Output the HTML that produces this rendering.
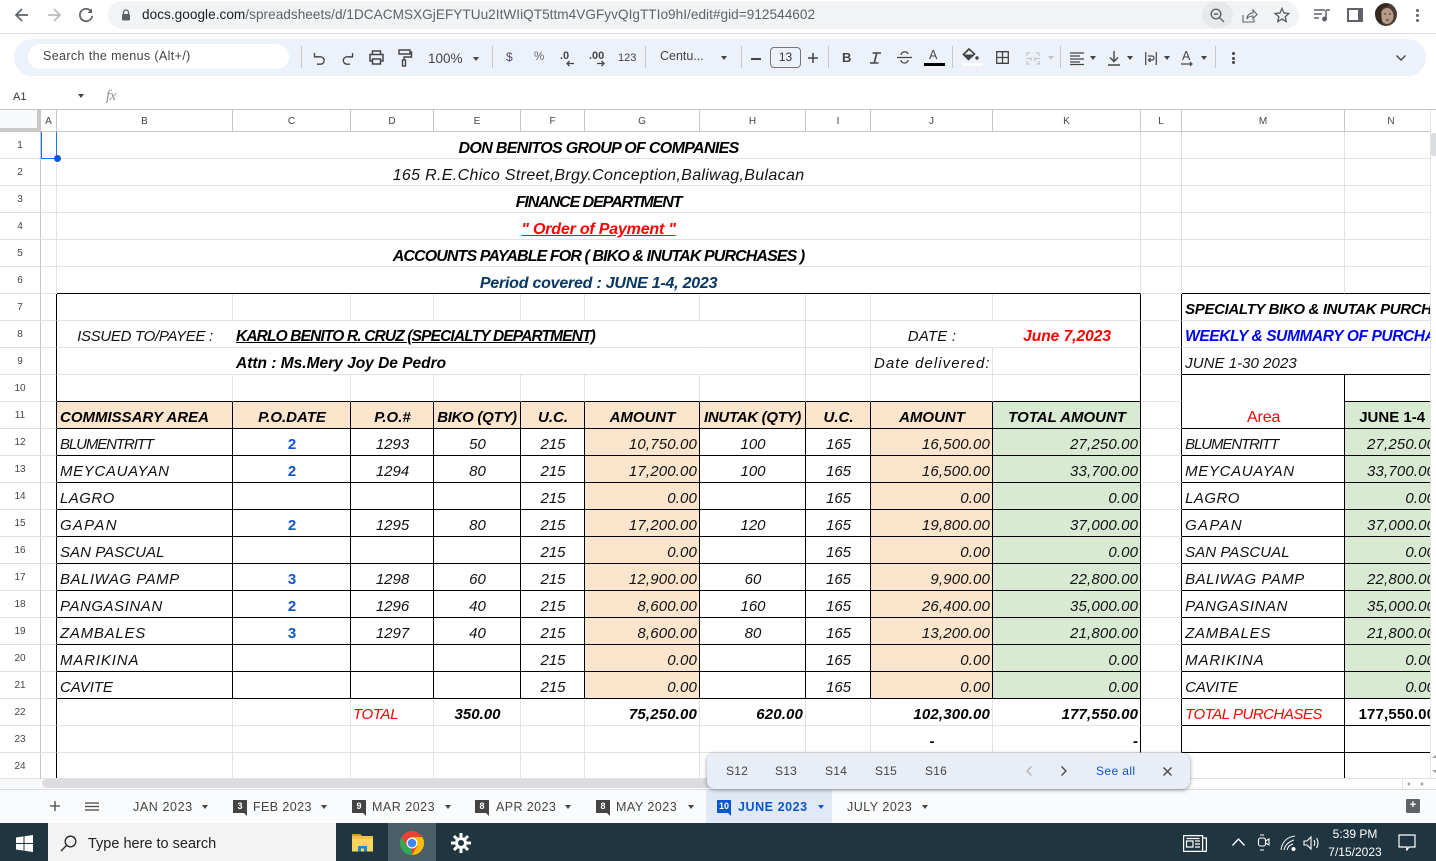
<!DOCTYPE html>
<html><head><meta charset="utf-8"><title>Sheet</title>
<style>
html,body{margin:0;padding:0;background:#fff}
#p{position:relative;width:1436px;height:861px;overflow:hidden;background:#fff;font-family:"Liberation Sans",sans-serif;color:#000}
.a{position:absolute;white-space:nowrap}
svg.a{overflow:visible}
.sep{position:absolute;top:46px;width:1px;height:22px;background:#c7c7c7}
.tb{font-size:13px;color:#444}
table{border-collapse:separate;border-spacing:0;table-layout:fixed}
#g{left:41px;top:132px;width:1397px}
#g td{box-sizing:border-box;height:27px;border-right:1px solid #e2e2e2;border-bottom:1px solid #e2e2e2;padding:0 2px 2px 3px;font-size:15px;font-style:italic;line-height:16px;vertical-align:bottom;white-space:nowrap;color:#111;overflow:visible}
#g td.r{border-right-color:#000}
#g td.b{border-bottom-color:#000}
#g td.n{border-right-color:transparent}
#g td.c{text-align:center}
#g td.e{text-align:right;letter-spacing:.15px}
#g td.t{letter-spacing:.4px}
#g td.h{font-weight:bold;text-align:center;color:#000}
#g td.B{font-weight:bold;color:#000}
#g td.o{background:#fce5cd}
#g td.v{background:#d9ead3}
#g td.d{font-weight:bold;font-style:normal;color:#1155cc;text-align:center}
#g tr.m td{font-size:16px;text-align:center;padding:0 0 1px}
#ch{left:41px;top:110px;width:1397px}
#ch td{box-sizing:border-box;height:22px;border-right:1px solid #c7c7c7;border-bottom:1px solid #c7c7c7;text-align:center;font-size:10px;color:#444;padding:1px 0 0}
#rh{left:0;top:132px;width:41px}
#rh td{box-sizing:border-box;height:27px;border-right:1px solid #c7c7c7;border-bottom:1px solid #e0e0e0;text-align:center;font-size:10px;color:#444;padding:0}
.tab{position:absolute;top:800px;font-size:12.5px;letter-spacing:.4px;color:#444;white-space:nowrap;line-height:15px}
.ar{position:absolute;width:0;height:0;border-left:3.5px solid transparent;border-right:3.5px solid transparent;border-top:4px solid #444}
.bd{position:absolute;top:800px;width:14px;height:13px;background:#444;color:#fff;font-size:9px;font-weight:bold;text-align:center;line-height:13px}
.bd:after{content:"";position:absolute;right:0;top:13px;border-top:3px solid #444;border-left:3px solid transparent}
.bl{background:#0b57d0}
.bl:after{border-top-color:#0b57d0}
.s{position:absolute;top:764px;font-size:12px;letter-spacing:.2px;color:#444;line-height:15px}
</style></head><body><div id="p">

<!-- browser chrome -->
<div class="a" style="left:108px;top:1px;width:1191px;height:28px;border-radius:14px;background:#f1f3f4"></div>
<div class="a" style="left:1202px;top:2px;width:31px;height:26px;border-radius:13px;background:#e6e8ea"></div>
<svg class="a" style="left:14px;top:7px" width="16" height="16" viewBox="0 0 16 16" fill="none" stroke="#5f6368" stroke-width="1.7"><path d="M14 8H2M8 2L2 8l6 6"/></svg>
<svg class="a" style="left:46px;top:7px" width="16" height="16" viewBox="0 0 16 16" fill="none" stroke="#b9bcc0" stroke-width="1.7"><path d="M2 8h12M8 2l6 6-6 6"/></svg>
<svg class="a" style="left:78px;top:7px" width="16" height="16" viewBox="0 0 16 16" fill="none" stroke="#5f6368" stroke-width="1.7"><path d="M13.500 5A6.200 6.200 0 1 0 14.200 9"/><path d="M14 1.500V6H9.500z" fill="#5f6368" stroke="none"/></svg>
<svg class="a" style="left:121px;top:9px" width="10" height="12" viewBox="0 0 10 12"><path d="M2.500 5V3.500a2.500 2.500 0 0 1 5 0V5" fill="none" stroke="#5f6368" stroke-width="1.300"/><rect x="1" y="5" width="8" height="6.500" rx="1" fill="#5f6368"/></svg>
<div class="a" style="left:142px;top:7px;font-size:13.6px;line-height:16px;color:#5f6368;letter-spacing:.035px"><span style="color:#202124">docs.google.com</span>/spreadsheets/d/1DCACMSXGjEFYTUu2ItWIiQT5ttm4VGFyvQIgTTIo9hI/edit#gid=912544602</div>
<svg class="a" style="left:1210px;top:8px" width="15" height="15" viewBox="0 0 15 15" fill="none" stroke="#5f6368" stroke-width="1.400"><circle cx="6" cy="6" r="4.800"/><path d="M9.500 9.500L14 14M3.800 6h4.400"/></svg>
<svg class="a" style="left:1242px;top:8px" width="16" height="15" viewBox="0 0 16 15" fill="none" stroke="#5f6368" stroke-width="1.100"><path d="M1 7v7h11v-3M5 11c0-4 3-6 6-6V2l4 4.500-4 4V8c-3 0-5 1-6 3z"/></svg>
<svg class="a" style="left:1274px;top:7px" width="16" height="16" viewBox="0 0 16 16" fill="none" stroke="#5f6368" stroke-width="1.400"><path d="M8 1.500l2 4.500 4.800.5-3.600 3.200 1 4.800L8 12.100 3.800 14.500l1-4.800L1.200 6.500 6 6z"/></svg>
<svg class="a" style="left:1314px;top:8px" width="16" height="14" viewBox="0 0 16 14" fill="none" stroke="#5f6368" stroke-width="1.500"><path d="M0 2h11M0 6h8M0 10h5M12 2h4M12 2v9"/><circle cx="10.500" cy="11" r="1.700" fill="#5f6368"/></svg>
<div class="a" style="left:1347px;top:8px;width:9px;height:10px;border:2.500px solid #5f6368;border-right-width:5px;border-left-width:2.500px"></div>
<svg class="a" style="left:1375px;top:3px" width="22" height="23" viewBox="0 0 22 23"><ellipse cx="11" cy="11.500" rx="11" ry="11.500" fill="#4b3d35"/><ellipse cx="12" cy="13" rx="6.500" ry="8" fill="#b89a88"/><path d="M0 9C2 2 9-1 15 1c-3 3-6 4-8 4-1 4-1 10 1 17-5-2-8-7-8-13z" fill="#33291f"/><path d="M9 11h2M14 11h2M11 17h3" stroke="#3a2a22" stroke-width="1"/></svg>
<div class="a" style="left:1416px;top:9px;width:3px;height:3px;border-radius:2px;background:#5f6368;box-shadow:0 5px 0 #5f6368,0 10px 0 #5f6368"></div>
<div class="a" style="left:0;top:33px;width:1436px;height:1px;background:#dadce0"></div>

<!-- toolbar -->
<div class="a" style="left:14px;top:39px;width:1412px;height:37px;border-radius:18px;background:#edf2fa"></div>
<div class="a" style="left:28px;top:44px;width:261px;height:25px;border-radius:13px;background:#fff"></div>
<div class="a" style="left:43px;top:48px;font-size:12.5px;line-height:16px;color:#444;letter-spacing:.38px">Search the menus (Alt+/)</div>
<div class="sep" style="left:301px"></div><div class="sep" style="left:492px"></div><div class="sep" style="left:645px"></div><div class="sep" style="left:741px"></div><div class="sep" style="left:828px"></div><div class="sep" style="left:952px"></div><div class="sep" style="left:1060px"></div><div class="sep" style="left:1215px"></div>
<svg class="a" style="left:313px;top:52px" width="13" height="13" viewBox="0 0 13 13" fill="none" stroke="#444" stroke-width="1.300"><path d="M1.500 1v4h4M1.800 4.800H7.500a3.700 3.700 0 0 1 0 7.400H4"/></svg>
<svg class="a" style="left:341px;top:52px" width="13" height="13" viewBox="0 0 13 13" fill="none" stroke="#444" stroke-width="1.300"><path d="M11.500 1v4h-4M11.200 4.800H6a3.700 3.700 0 0 0 0 7.400h3"/></svg>
<svg class="a" style="left:369px;top:50px" width="15" height="15" viewBox="0 0 15 15" fill="none" stroke="#444" stroke-width="1.500"><path d="M3.500 4.500V1h8v3.500M3.500 11H1V4.500h13V11h-2.500M3.500 9h8v5h-8z"/></svg>
<svg class="a" style="left:398px;top:49px" width="14" height="18" viewBox="0 0 14 18" fill="none" stroke="#444" stroke-width="1.400"><path d="M1 1h11v4H1zM12 3h1.500v5H6v3"/><rect x="4.500" y="11" width="3" height="6"/></svg>
<div class="a tb" style="left:428px;top:51px;line-height:16px;font-size:13.500px">100%</div>
<div class="ar" style="left:473px;top:57px"></div>
<div class="a tb" style="left:506px;top:50px;font-size:12px;line-height:15px;color:#5b4a6a">$</div>
<div class="a tb" style="left:534px;top:50px;font-size:11.500px;line-height:15px;color:#666">%</div>
<div class="a" style="left:560px;top:49px;font-size:11px;font-weight:bold;color:#444;line-height:14px">.0</div>
<svg class="a" style="left:566px;top:60px" width="8" height="7" viewBox="0 0 8 7" fill="none" stroke="#444" stroke-width="1.300"><path d="M8 3.500H1M3.500 1L1 3.500 3.500 6"/></svg>
<div class="a" style="left:589px;top:49px;font-size:11px;font-weight:bold;color:#444;line-height:14px">.00</div>
<svg class="a" style="left:597px;top:60px" width="8" height="7" viewBox="0 0 8 7" fill="none" stroke="#444" stroke-width="1.300"><path d="M0 3.500h7M4.500 1L7 3.500 4.500 6"/></svg>
<div class="a tb" style="left:618px;top:51px;font-size:11px;line-height:14px">123</div>
<div class="a tb" style="left:660px;top:49px;font-size:12.500px;line-height:15px">Centu...</div>
<div class="ar" style="left:721px;top:56px"></div>
<div class="a" style="left:751px;top:58px;width:10px;height:1.500px;background:#444"></div>
<div class="a" style="left:770px;top:47px;box-sizing:border-box;width:31px;height:21px;border:1px solid #747775;border-radius:4px;text-align:center;font-size:12px;line-height:19px;color:#333">13</div>
<svg class="a" style="left:808px;top:53px" width="10" height="10" viewBox="0 0 10 10" stroke="#444" stroke-width="1.500"><path d="M0 5h10M5 0v10"/></svg>
<div class="a" style="left:842px;top:50px;font-size:13px;font-weight:bold;line-height:16px;color:#444">B</div>
<svg class="a" style="left:870px;top:52px" width="11" height="12" viewBox="0 0 11 12" fill="none" stroke="#444" stroke-width="1.600"><path d="M2.500 1H11M0 11h8.500M6.800 1L4.200 11"/></svg>
<svg class="a" style="left:897px;top:51px" width="15" height="13" viewBox="0 0 15 13" fill="none" stroke="#444" stroke-width="1.300"><path d="M0 6.500h15M4 4c0-4 7-4 7-1M4 9c0 4 7 4 7 0"/></svg>
<div class="a" style="left:929px;top:48px;font-size:12.500px;line-height:15px;color:#444">A</div>
<div class="a" style="left:924px;top:63px;width:21px;height:3px;background:#000"></div>
<svg class="a" style="left:962px;top:48px" width="17" height="13" viewBox="0 0 17 13"><path d="M7 1L1.500 6.500 6.500 11.500 12.500 6z" fill="none" stroke="#444" stroke-width="1.700"/><path d="M2 6.500h10.500L6.500 11.500z" fill="#444"/><circle cx="15" cy="10" r="1.700" fill="#444"/></svg>
<div class="a" style="left:962px;top:63px;width:21px;height:3px;background:#fff"></div>
<svg class="a" style="left:996px;top:51px" width="13" height="13" viewBox="0 0 13 13" fill="none" stroke="#444" stroke-width="1.300"><path d="M.700.700h11.600v11.600H.700zM6.500 .7v11.600M.7 6.500h11.600"/></svg>
<svg class="a" style="left:1026px;top:52px" width="14" height="13" viewBox="0 0 14 13" fill="none" stroke="#c4c7c9" stroke-width="1.300"><path d="M4 1H1v3M10 1h3v3M4 12H1V9M10 12h3V9M6 5.500L4 7l2 1.500M8 5.500L10 7 8 8.500M0 6.500h4M10 6.500h4"/></svg>
<div class="ar" style="left:1048px;top:56px;border-top-color:#c4c7c9"></div>
<svg class="a" style="left:1070px;top:52px" width="14" height="13" viewBox="0 0 14 13" stroke="#444" stroke-width="1.200"><path d="M0 1h14M0 4h10M0 7h14M0 10h10M0 12.500h14"/></svg>
<div class="ar" style="left:1090px;top:56px"></div>
<svg class="a" style="left:1108px;top:51px" width="12" height="15" viewBox="0 0 12 15" fill="none" stroke="#444" stroke-width="1.400"><path d="M6 0v10M2 6.500L6 10.500 10 6.500M0 14h12"/></svg>
<div class="ar" style="left:1127px;top:56px"></div>
<svg class="a" style="left:1145px;top:52px" width="12" height="13" viewBox="0 0 12 13" fill="none" stroke="#444" stroke-width="1.200"><path d="M.7 0v13M11.300 0v13M3 4h4a2 2 0 0 1 0 4H4M5.500 6L3.500 8l2 2"/></svg>
<div class="ar" style="left:1164px;top:56px"></div>
<div class="a" style="left:1182px;top:49px;font-size:12.500px;line-height:14px;color:#444">A</div>
<svg class="a" style="left:1181px;top:62px" width="13" height="5" viewBox="0 0 13 5" fill="none" stroke="#444" stroke-width="1.200"><path d="M0 2h11M9 0l2 2-2 2"/></svg>
<div class="ar" style="left:1201px;top:56px"></div>
<div class="a" style="left:1232px;top:52px;width:3px;height:3px;border-radius:2px;background:#444;box-shadow:0 5px 0 #444,0 9px 0 #444"></div>
<svg class="a" style="left:1396px;top:55px" width="10" height="6" viewBox="0 0 10 6" fill="none" stroke="#444" stroke-width="1.400"><path d="M.5.500L5 5 9.500.5"/></svg>

<!-- formula bar -->
<div class="a" style="left:13px;top:90px;font-size:11px;line-height:14px;color:#333">A1</div>
<div class="ar" style="left:78px;top:94px"></div>
<div class="a" style="left:106px;top:88px;font-family:'Liberation Serif',serif;font-style:italic;font-size:15px;line-height:16px;color:#909090;letter-spacing:-.5px">fx</div>

<!-- grid -->
<div class="a" style="left:0;top:109px;width:1436px;height:1px;background:#c7c7c7"></div>
<div class="a" style="left:0;top:110px;width:37px;height:18px;background:#f8f9fa"></div>
<div class="a" style="left:37px;top:110px;width:4px;height:22px;background:#c7c7c7"></div>
<div class="a" style="left:0;top:128px;width:37px;height:4px;background:#c7c7c7"></div>
<table class="a" id="ch"><colgroup><col width="16"><col width="176"><col width="118"><col width="83"><col width="87"><col width="64"><col width="115"><col width="106"><col width="65"><col width="122"><col width="148"><col width="41"><col width="163"><col width="93"></colgroup>
<tr><td>A</td><td>B</td><td>C</td><td>D</td><td>E</td><td>F</td><td>G</td><td>H</td><td>I</td><td>J</td><td>K</td><td>L</td><td>M</td><td>N</td></tr></table>
<table class="a" id="rh">
<tr><td>1</td></tr><tr><td>2</td></tr><tr><td>3</td></tr><tr><td>4</td></tr><tr><td>5</td></tr><tr><td>6</td></tr><tr><td>7</td></tr><tr><td>8</td></tr><tr><td>9</td></tr><tr><td>10</td></tr><tr><td>11</td></tr><tr><td>12</td></tr><tr><td>13</td></tr><tr><td>14</td></tr><tr><td>15</td></tr><tr><td>16</td></tr><tr><td>17</td></tr><tr><td>18</td></tr><tr><td>19</td></tr><tr><td>20</td></tr><tr><td>21</td></tr><tr><td>22</td></tr><tr><td>23</td></tr><tr><td>24</td></tr></table>

<div class="a" style="left:0;top:0;width:1430px;height:779px;overflow:hidden;pointer-events:none">
<table class="a" id="g"><colgroup><col width="16"><col width="176"><col width="118"><col width="83"><col width="87"><col width="64"><col width="115"><col width="106"><col width="65"><col width="122"><col width="148"><col width="41"><col width="163"><col width="93"></colgroup>
<tr class="m"><td></td><td colspan="10" style="font-weight:bold;color:#000;letter-spacing:-.67px">DON BENITOS GROUP OF COMPANIES</td><td></td><td></td><td></td></tr>
<tr class="m"><td></td><td colspan="10" style="letter-spacing:.33px">165 R.E.Chico Street,Brgy.Conception,Baliwag,Bulacan</td><td></td><td></td><td></td></tr>
<tr class="m"><td></td><td colspan="10" style="font-weight:bold;color:#000;letter-spacing:-1.08px">FINANCE DEPARTMENT</td><td></td><td></td><td></td></tr>
<tr class="m"><td></td><td colspan="10" style="font-weight:bold;color:#f00;text-decoration:underline;letter-spacing:-.2px">" Order of Payment "</td><td></td><td></td><td></td></tr>
<tr class="m"><td></td><td colspan="10" style="font-weight:bold;color:#000;letter-spacing:-.9px">ACCOUNTS PAYABLE FOR ( BIKO &amp; INUTAK PURCHASES )</td><td></td><td></td><td></td></tr>
<tr class="m"><td></td><td colspan="10" class="b" style="font-weight:bold;color:#073763;letter-spacing:-.23px">Period covered : JUNE 1-4, 2023</td><td></td><td class="b"></td><td class="b"></td></tr>
<tr><td class="r"></td><td></td><td></td><td></td><td></td><td></td><td></td><td></td><td></td><td></td><td class="r"></td><td class="r"></td><td colspan="2" class="B" style="border-right:0;letter-spacing:-.35px">SPECIALTY BIKO &amp; INUTAK PURCHASES</td></tr>
<tr><td class="r"></td><td class="c n" style="letter-spacing:-.3px">ISSUED TO/PAYEE :</td><td colspan="5" class="B n" style="text-decoration:underline;font-size:15.5px;letter-spacing:-.85px">KARLO BENITO R. CRUZ (SPECIALTY DEPARTMENT)</td><td></td><td></td><td class="c n" style="letter-spacing:.2px">DATE :</td><td class="c r" style="color:#f00;font-weight:bold;font-size:15.500px">June 7,2023</td><td class="r"></td><td colspan="2" class="B" style="color:#00f;border-right:0;font-size:15.500px;letter-spacing:-.4px">WEEKLY &amp; SUMMARY OF PURCHASES</td></tr>
<tr><td class="r"></td><td class="n"></td><td colspan="5" class="B n" style="font-size:15.500px">Attn : Ms.Mery Joy De Pedro</td><td></td><td></td><td class="e" style="letter-spacing:1.05px">Date delivered:</td><td class="r"></td><td class="r"></td><td colspan="2" class="b" style="border-right:0;letter-spacing:.05px">JUNE 1-30 2023</td></tr>
<tr><td class="r"></td><td class="b"></td><td class="b"></td><td class="b"></td><td class="b"></td><td class="b"></td><td class="b"></td><td class="b"></td><td class="b"></td><td class="b"></td><td class="b r"></td><td class="r"></td><td rowspan="2" class="r b c" style="font-style:normal;color:#f00;font-size:16px;letter-spacing:-.1px">Area</td><td class="b"></td></tr>
<tr><td class="r"></td><td class="o b r B">COMMISSARY AREA</td><td class="o b r h">P.O.DATE</td><td class="o b r h">P.O.#</td><td class="o b r h" style="padding-left:0;padding-right:0;letter-spacing:-.3px">BIKO (QTY)</td><td class="o b r h">U.C.</td><td class="o b r h">AMOUNT</td><td class="o b r h" style="padding-left:0;padding-right:0;letter-spacing:-.3px">INUTAK (QTY)</td><td class="o b r h">U.C.</td><td class="o b r h">AMOUNT</td><td class="v b r h">TOTAL AMOUNT</td><td class="r"></td><td class="v b h" style="font-style:normal;padding-left:2px;padding-right:0;text-align:center">JUNE 1-4</td></tr>
<tr><td class="r"></td><td class="b r" style="letter-spacing:-1.1px">BLUMENTRITT</td><td class="b r d">2</td><td class="b r c">1293</td><td class="b r c">50</td><td class="b r c">215</td><td class="o b r e">10,750.00</td><td class="b r c">100</td><td class="b r c">165</td><td class="o b r e">16,500.00</td><td class="v b r e">27,250.00</td><td class="r"></td><td class="b r" style="letter-spacing:-1.1px">BLUMENTRITT</td><td class="v b e">27,250.00</td></tr>
<tr><td class="r"></td><td class="b r" style="letter-spacing:.65px">MEYCAUAYAN</td><td class="b r d">2</td><td class="b r c">1294</td><td class="b r c">80</td><td class="b r c">215</td><td class="o b r e">17,200.00</td><td class="b r c">100</td><td class="b r c">165</td><td class="o b r e">16,500.00</td><td class="v b r e">33,700.00</td><td class="r"></td><td class="b r" style="letter-spacing:.65px">MEYCAUAYAN</td><td class="v b e">33,700.00</td></tr>
<tr><td class="r"></td><td class="b r" style="letter-spacing:.45px">LAGRO</td><td class="b r d"></td><td class="b r c"></td><td class="b r c"></td><td class="b r c">215</td><td class="o b r e">0.00</td><td class="b r c"></td><td class="b r c">165</td><td class="o b r e">0.00</td><td class="v b r e">0.00</td><td class="r"></td><td class="b r" style="letter-spacing:.45px">LAGRO</td><td class="v b e">0.00</td></tr>
<tr><td class="r"></td><td class="b r" style="letter-spacing:1.25px">GAPAN</td><td class="b r d">2</td><td class="b r c">1295</td><td class="b r c">80</td><td class="b r c">215</td><td class="o b r e">17,200.00</td><td class="b r c">120</td><td class="b r c">165</td><td class="o b r e">19,800.00</td><td class="v b r e">37,000.00</td><td class="r"></td><td class="b r" style="letter-spacing:1.25px">GAPAN</td><td class="v b e">37,000.00</td></tr>
<tr><td class="r"></td><td class="b r" style="letter-spacing:.05px">SAN PASCUAL</td><td class="b r d"></td><td class="b r c"></td><td class="b r c"></td><td class="b r c">215</td><td class="o b r e">0.00</td><td class="b r c"></td><td class="b r c">165</td><td class="o b r e">0.00</td><td class="v b r e">0.00</td><td class="r"></td><td class="b r" style="letter-spacing:.05px">SAN PASCUAL</td><td class="v b e">0.00</td></tr>
<tr><td class="r"></td><td class="b r" style="letter-spacing:.5px">BALIWAG PAMP</td><td class="b r d">3</td><td class="b r c">1298</td><td class="b r c">60</td><td class="b r c">215</td><td class="o b r e">12,900.00</td><td class="b r c">60</td><td class="b r c">165</td><td class="o b r e">9,900.00</td><td class="v b r e">22,800.00</td><td class="r"></td><td class="b r" style="letter-spacing:.5px">BALIWAG PAMP</td><td class="v b e">22,800.00</td></tr>
<tr><td class="r"></td><td class="b r" style="letter-spacing:.55px">PANGASINAN</td><td class="b r d">2</td><td class="b r c">1296</td><td class="b r c">40</td><td class="b r c">215</td><td class="o b r e">8,600.00</td><td class="b r c">160</td><td class="b r c">165</td><td class="o b r e">26,400.00</td><td class="v b r e">35,000.00</td><td class="r"></td><td class="b r" style="letter-spacing:.55px">PANGASINAN</td><td class="v b e">35,000.00</td></tr>
<tr><td class="r"></td><td class="b r" style="letter-spacing:.75px">ZAMBALES</td><td class="b r d">3</td><td class="b r c">1297</td><td class="b r c">40</td><td class="b r c">215</td><td class="o b r e">8,600.00</td><td class="b r c">80</td><td class="b r c">165</td><td class="o b r e">13,200.00</td><td class="v b r e">21,800.00</td><td class="r"></td><td class="b r" style="letter-spacing:.75px">ZAMBALES</td><td class="v b e">21,800.00</td></tr>
<tr><td class="r"></td><td class="b r" style="letter-spacing:.85px">MARIKINA</td><td class="b r d"></td><td class="b r c"></td><td class="b r c"></td><td class="b r c">215</td><td class="o b r e">0.00</td><td class="b r c"></td><td class="b r c">165</td><td class="o b r e">0.00</td><td class="v b r e">0.00</td><td class="r"></td><td class="b r" style="letter-spacing:.85px">MARIKINA</td><td class="v b e">0.00</td></tr>
<tr><td class="r"></td><td class="b r" style="letter-spacing:-.1px">CAVITE</td><td class="b r d"></td><td class="b r c"></td><td class="b r c"></td><td class="b r c">215</td><td class="o b r e">0.00</td><td class="b r c"></td><td class="b r c">165</td><td class="o b r e">0.00</td><td class="v b r e">0.00</td><td class="r"></td><td class="b r" style="letter-spacing:-.1px">CAVITE</td><td class="v b e">0.00</td></tr>
<tr><td class="r"></td><td></td><td></td><td style="color:#f00;padding-left:2px;letter-spacing:-.35px">TOTAL</td><td class="B c">350.00</td><td></td><td class="B e">75,250.00</td><td class="B e">620.00</td><td></td><td class="B e">102,300.00</td><td class="B e r">177,550.00</td><td class="r"></td><td class="b r" style="color:#f00;letter-spacing:-.5px">TOTAL PURCHASES</td><td class="b B e" style="font-style:normal">177,550.00</td></tr>
<tr><td class="r"></td><td></td><td></td><td></td><td></td><td></td><td></td><td></td><td></td><td class="B c">-</td><td class="B e r">-</td><td class="r"></td><td class="b r"></td><td class="b"></td></tr>
<tr><td class="r"></td><td></td><td></td><td></td><td></td><td></td><td></td><td></td><td></td><td></td><td class="r"></td><td></td><td class="r"></td><td></td></tr>
</table></div>

<!-- selection -->
<div class="a" style="left:41px;top:132px;box-sizing:border-box;width:16px;height:27px;border:1.500px solid #1a73e8;border-top:0"></div>
<div class="a" style="left:54px;top:155px;width:7px;height:7px;border-radius:50%;background:#0b57d0"></div>

<!-- scrollbars -->
<div class="a" style="left:1430px;top:110px;width:6px;height:680px;background:#fff;border-left:1px solid #e2e2e2"></div>
<div class="a" style="left:1431px;top:133px;width:6px;height:23px;border-radius:3px 0 0 3px;background:#dadce0"></div>
<div class="a" style="left:1432px;top:755px;border-left:3px solid transparent;border-right:3px solid transparent;border-bottom:3px solid #aaa"></div>
<div class="a" style="left:1432px;top:770px;border-left:3px solid transparent;border-right:3px solid transparent;border-top:3px solid #aaa"></div>
<div class="a" style="left:0;top:778px;width:1436px;height:11px;background:#fff;border-top:1px solid #e2e2e2"></div>
<div class="a" style="left:0;top:779px;width:41px;height:10px;background:#f8f9fa"></div>
<div class="a" style="left:42px;top:779px;width:670px;height:9px;border-radius:5px;background:#dadce0"></div>
<div class="a" style="left:1402px;top:779px;width:27px;height:10px;border-left:1px solid #e2e2e2"></div>
<div class="a" style="left:1407px;top:782px;border-top:2.500px solid transparent;border-bottom:2.500px solid transparent;border-right:3px solid #999"></div>
<div class="a" style="left:1421px;top:782px;border-top:2.500px solid transparent;border-bottom:2.500px solid transparent;border-left:3px solid #999"></div>

<!-- tabs bar -->
<div class="a" style="left:0;top:789px;width:1436px;height:34px;background:#f9fbfd;border-top:1px solid #dadce0;box-sizing:border-box"></div>
<div class="a" style="left:706px;top:790px;width:126px;height:33px;background:#e1e9f7"></div>
<svg class="a" style="left:50px;top:801px" width="10" height="10" viewBox="0 0 10 10" stroke="#444" stroke-width="1.300"><path d="M0 5h10M5 0v10"/></svg>
<svg class="a" style="left:85px;top:802px" width="14" height="9" viewBox="0 0 14 9" stroke="#444" stroke-width="1.300"><path d="M0 1h14M0 4.500h14M0 8h14"/></svg>
<div class="tab" style="left:133px;letter-spacing:.6px">JAN 2023</div><div class="ar" style="left:202px;top:805px"></div>
<div class="bd" style="left:233px">3</div><div class="tab" style="left:253px">FEB 2023</div><div class="ar" style="left:321px;top:805px"></div>
<div class="bd" style="left:352px">9</div><div class="tab" style="left:372px;letter-spacing:.5px">MAR 2023</div><div class="ar" style="left:445px;top:805px"></div>
<div class="bd" style="left:475px">8</div><div class="tab" style="left:496px">APR 2023</div><div class="ar" style="left:565px;top:805px"></div>
<div class="bd" style="left:596px">8</div><div class="tab" style="left:616px;letter-spacing:.5px">MAY 2023</div><div class="ar" style="left:688px;top:805px"></div>
<div class="bd bl" style="left:717px">10</div><div class="tab" style="left:738px;color:#0b57d0;font-weight:bold;letter-spacing:.55px">JUNE 2023</div><div class="ar" style="left:818px;top:805px;border-top-color:#0b57d0"></div>
<div class="tab" style="left:847px;letter-spacing:.5px">JULY 2023</div><div class="ar" style="left:922px;top:805px"></div>
<div class="a" style="left:1406px;top:799px;width:14px;height:14px;background:#5f6368;border-radius:1px;color:#fff;text-align:center;font-size:11px;line-height:13px;font-weight:bold">+</div>

<!-- popover -->
<div class="a" style="left:707px;top:753px;width:483px;height:36px;border-radius:8px;background:#e9eef6;box-shadow:0 1px 4px rgba(60,64,67,.55)"></div>
<div class="s" style="left:726px">S12</div><div class="s" style="left:775px">S13</div><div class="s" style="left:825px">S14</div><div class="s" style="left:875px">S15</div><div class="s" style="left:925px">S16</div>
<svg class="a" style="left:1026px;top:766px" width="6" height="10" viewBox="0 0 6 10" fill="none" stroke="#b0b3b8" stroke-width="1.300"><path d="M5.500.5L1 5l4.500 4.500"/></svg>
<svg class="a" style="left:1061px;top:766px" width="6" height="10" viewBox="0 0 6 10" fill="none" stroke="#444" stroke-width="1.300"><path d="M.5.500L5 5 .5 9.500"/></svg>
<div class="s" style="left:1096px;color:#0b57d0;letter-spacing:.4px">See all</div>
<svg class="a" style="left:1163px;top:767px" width="9" height="9" viewBox="0 0 9 9" stroke="#444" stroke-width="1.300"><path d="M.5.500l8 8M8.500.5l-8 8"/></svg>

<!-- taskbar -->
<div class="a" style="left:0;top:823px;width:1436px;height:38px;background:#1f3540"></div>
<svg class="a" style="left:16px;top:835px" width="17" height="17" viewBox="0 0 17 17" fill="#fff"><path d="M0 2.500L7.500 1.400V8H0zM8.500 1.300L17 0v8H8.500zM0 9h7.500v6.600L0 14.500zM8.500 9H17v8L8.500 15.700z"/></svg>
<div class="a" style="left:48px;top:823px;width:288px;height:38px;background:#f3f3f3"></div>
<svg class="a" style="left:60px;top:835px" width="17" height="17" viewBox="0 0 17 17" fill="none" stroke="#222" stroke-width="1.300"><circle cx="10.500" cy="6.500" r="5.300"/><path d="M6.800 10.200L1 16"/></svg>
<div class="a" style="left:88px;top:835px;font-size:14.500px;line-height:18px;color:#222">Type here to search</div>
<svg class="a" style="left:352px;top:833px" width="21" height="19" viewBox="0 0 21 19"><path d="M0 1h8l2 2h11v15H0z" fill="#f5c344"/><path d="M0 1h8l2 2H0z" fill="#d99c21"/><rect x="0" y="6" width="21" height="12.500" fill="#fbd55c"/><path d="M6 13h9v5.500H6z" fill="#1e88d8"/><path d="M9 15.500h3v3H9z" fill="#fbd55c"/></svg>
<div class="a" style="left:388px;top:823px;width:48px;height:38px;background:#4b5f69"></div>
<svg class="a" style="left:400px;top:831px" width="24" height="24" viewBox="0 0 24 24"><circle cx="12" cy="12" r="12" fill="#ea4335"/><path d="M12 24A12 12 0 0 1 1.600 6l5.200 9 5.200 3z" fill="#34a853"/><path d="M12 24a12 12 0 0 0 10.400-18L12 6l5.200 9z" fill="#fbbc05"/><circle cx="12" cy="12" r="5.500" fill="#fff"/><circle cx="12" cy="12" r="4.300" fill="#4285f4"/></svg>
<svg class="a" style="left:451px;top:833px" width="20" height="20" viewBox="0 0 20 20" fill="none" stroke="#fff"><circle cx="10" cy="10" r="4.500" stroke-width="3"/><path d="M10 0v4M10 16v4M0 10h4M16 10h4M3 3l2.800 2.800M14.200 14.200L17 17M17 3l-2.800 2.800M5.800 14.200L3 17" stroke-width="3"/></svg>
<svg class="a" style="left:1183px;top:835px" width="24" height="17" viewBox="0 0 24 17" fill="none" stroke="#fff" stroke-width="1.200"><path d="M.6.600h19v15.800H.6zM19.600 3h3.800v13.400h-3.800M3.500 6h6.500v6H3.500zM12 6h5M12 9h5M12 12h5M3.500 3.500h13"/></svg>
<svg class="a" style="left:1232px;top:838px" width="13" height="8" viewBox="0 0 13 8" fill="none" stroke="#fff" stroke-width="1.300"><path d="M.5 7.500L6.500 1l6 6.500"/></svg>
<svg class="a" style="left:1257px;top:834px" width="13" height="18" viewBox="0 0 13 18" fill="none" stroke="#fff" stroke-width="1.100"><rect x="1.500" y="4" width="7" height="8" rx="2"/><path d="M8.500 7l3.500-2v6l-3.500-2M3 1h4M3 16h4"/></svg>
<svg class="a" style="left:1281px;top:835px" width="15" height="16" viewBox="0 0 15 16" fill="none" stroke="#fff" stroke-width="1"><path d="M0 15C1 7 6 2 14 1M3 15c1-5 4-8 10-10M6 15c1-3 2-5 6-6"/><circle cx="12.500" cy="14" r="1.500" fill="#fff"/></svg>
<svg class="a" style="left:1303px;top:835px" width="16" height="16" viewBox="0 0 16 16" fill="none" stroke="#fff" stroke-width="1.100"><path d="M1 6v4h3l4 4V2L4 6zM11 5c1 2 1 4 0 6M13.500 3c2 3 2 7 0 10"/></svg>
<div class="a" style="left:1320px;top:826px;width:70px;text-align:center;font-size:12px;line-height:16px;color:#fff">5:39 PM</div>
<div class="a" style="left:1320px;top:844px;width:70px;text-align:center;font-size:12px;line-height:16px;color:#fff">7/15/2023</div>
<svg class="a" style="left:1398px;top:834px" width="18" height="18" viewBox="0 0 18 18" fill="none" stroke="#fff" stroke-width="1.200"><path d="M1 1h16v12h-6l-2.500 3.500L9 13H1z"/></svg>
</div></body></html>
